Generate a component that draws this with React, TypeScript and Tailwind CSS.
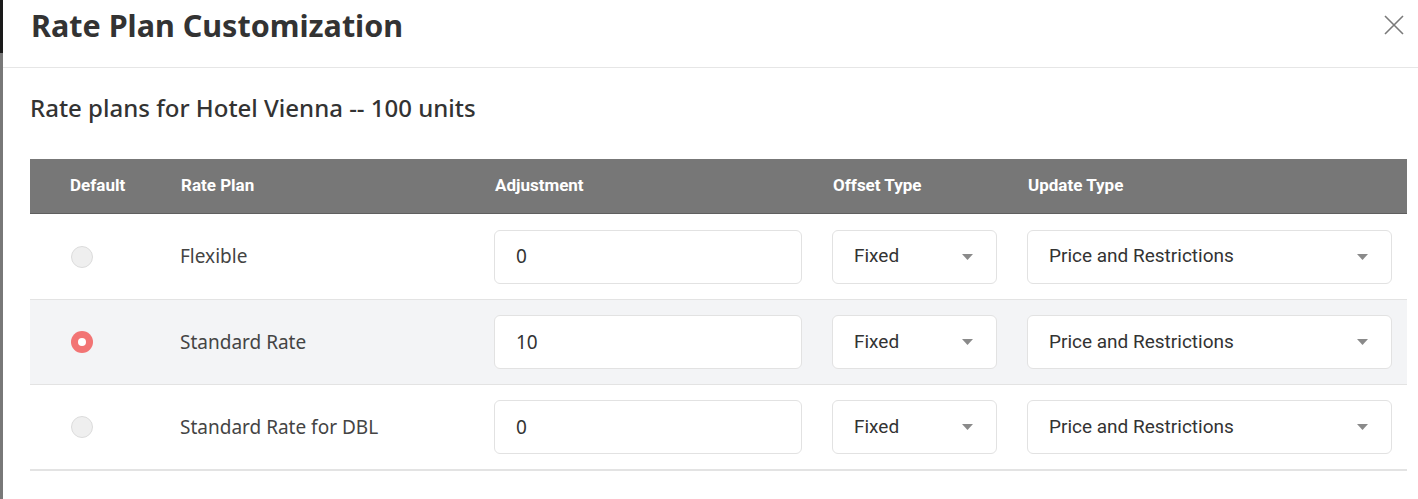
import React from 'react';

type Row = { name: string; adjustment: string; offset: string; update: string; isDefault: boolean };

const rows: Row[] = [
  { name: 'Flexible', adjustment: '0', offset: 'Fixed', update: 'Price and Restrictions', isDefault: false },
  { name: 'Standard Rate', adjustment: '10', offset: 'Fixed', update: 'Price and Restrictions', isDefault: true },
  { name: 'Standard Rate for DBL', adjustment: '0', offset: 'Fixed', update: 'Price and Restrictions', isDefault: false },
];

const cols = 'grid grid-cols-[150px_314px_338px_195px_1fr]';
const rowStyles = ['h-[86px] bg-white border-b', 'h-[85px] bg-[#f3f4f6] border-b', 'h-[86px] bg-white border-b-2'];

function Caret() {
  return (
    <svg width="11" height="6" viewBox="0 0 11 6" className="shrink-0">
      <path d="M0 0 L11 0 L5.5 6 Z" fill="#8a8a8a" />
    </svg>
  );
}

function Select({ value, width }: { value: string; width: string }) {
  return (
    <div
      className={`${width} h-[54px] flex items-center justify-between pl-[21px] pr-[23px] bg-white border border-[#e2e2e2] rounded-md text-[19px] text-[#333] font-['Roboto',sans-serif]`}
    >
      <span>{value}</span>
      <Caret />
    </div>
  );
}

function Radio({ checked }: { checked: boolean }) {
  if (checked) {
    return (
      <div className="w-[22px] h-[22px] rounded-full bg-[#f27474] flex items-center justify-center">
        <div className="w-[8px] h-[8px] rounded-full bg-white" />
      </div>
    );
  }
  return <div className="w-[22px] h-[22px] rounded-full bg-[#efefef] border border-[#dcdcdc]" />;
}

export default function App() {
  return (
    <div className="w-[1418px] h-[499px] flex bg-white overflow-hidden font-['Noto_Sans',sans-serif]">
      <div className="w-[3px] flex flex-col shrink-0">
        <div className="h-[53px] bg-[#1a1a1a]" />
        <div className="flex-1 bg-[#787878]" />
      </div>
      <div className="flex-1 flex flex-col">
        <div className="h-[68px] flex items-start justify-between pt-[10px] pl-[28px] pr-[14px] border-b border-[#e6e6e6]">
          <h1 className="text-[30.5px] font-bold text-[#333] leading-[30px]">Rate Plan Customization</h1>
          <svg width="20" height="20" viewBox="0 0 20 20" className="mt-[5px]">
            <path d="M1 1 L19 19 M19 1 L1 19" stroke="#7a7a7a" strokeWidth="1.6" />
          </svg>
        </div>
        <div className="pl-[27px] pr-[11px]">
          <h2 className="mt-[24px] text-[24px] font-medium text-[#333] leading-[32px]">
            Rate plans for Hotel Vienna -- 100 units
          </h2>
          <div className="mt-[35px]">
            <div
              className={`${cols} h-[55px] items-center bg-[#777] border-b border-[#5f5f5f] text-white text-[17px] font-bold font-['Roboto',sans-serif]`}
            >
              <div className="pl-[40px]">Default</div>
              <div className="pl-[1px]">Rate Plan</div>
              <div className="pl-[1px]">Adjustment</div>
              <div className="pl-[1px]">Offset Type</div>
              <div className="pl-[1px]">Update Type</div>
            </div>
            {rows.map((r, i) => (
              <div key={r.name} className={`${cols} items-center border-[#e3e3e3] ${rowStyles[i]}`}>
                <div className="pl-[41px]">
                  <Radio checked={r.isDefault} />
                </div>
                <div className="text-[19px] text-[#444]">{r.name}</div>
                <div>
                  <div className="w-[308px] h-[54px] flex items-center pl-[21px] bg-white border border-[#e2e2e2] rounded-md text-[19px] text-[#333]">
                    {r.adjustment}
                  </div>
                </div>
                <div>
                  <Select value={r.offset} width="w-[165px]" />
                </div>
                <div>
                  <Select value={r.update} width="w-[365px]" />
                </div>
              </div>
            ))}
          </div>
        </div>
      </div>
    </div>
  );
}
